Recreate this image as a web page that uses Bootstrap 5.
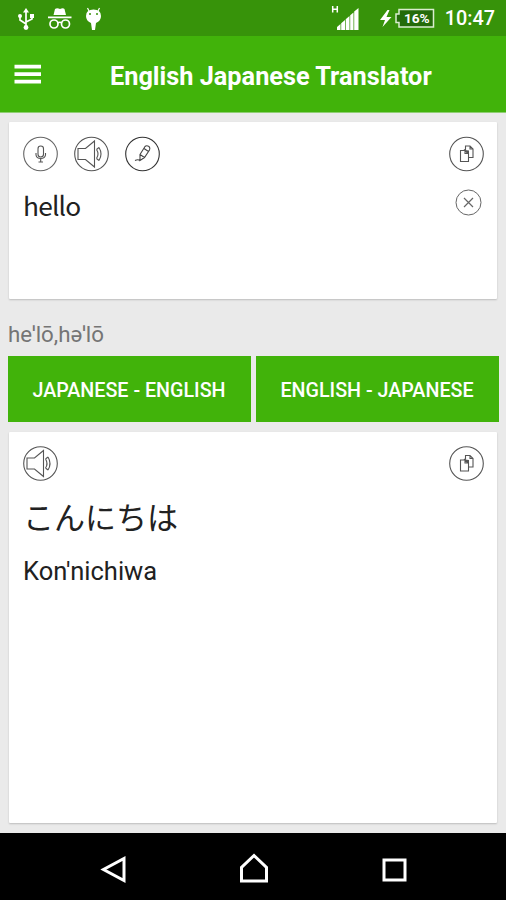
<!DOCTYPE html>
<html lang="en">
<head>
<meta charset="utf-8">
<meta name="viewport" content="width=device-width, initial-scale=1">
<title>English Japanese Translator</title>
<link href="https://cdn.jsdelivr.net/npm/bootstrap@5.3.0/dist/css/bootstrap.min.css" rel="stylesheet">
<style>
body{font-family:Roboto,"Noto Sans","Noto Sans CJK JP",sans-serif;background:#eaeaea;color:#212121;height:900px;overflow:hidden}
svg{display:block;flex:none}
.status-bar{height:36px;background:#37930a;padding:0 11px 0 17px}
.clock{font-size:19.8px;font-weight:500;line-height:36px;margin:2px 0 0 9px}
.app-bar{height:77px;background:#41b30a;padding:0 14px;border-bottom:1px solid #8fce72}
.app-title{font-size:25.3px;font-weight:700;line-height:30px;margin:5px 0 0 69px;white-space:nowrap}
.screen-body{padding:9px 9px 10px}
.panel{border-radius:1px;box-shadow:0 1px 2px #0003;padding:14px 12px 0 14px}
.source-panel{height:177px}
.result-panel{height:391px;margin-top:10px}
.tools{gap:15px}
.icon-btn{background:none;border:0;padding:0}
.source-text{font-family:"Noto Sans CJK JP",sans-serif;font-size:26.3px;letter-spacing:-.8px;line-height:34px}
.clear-btn{margin:-6px 3px 0 0}
.phonetic{font-size:22.3px;line-height:30px;color:#757575;margin:20px 0 7px -1px}
.lang-row{gap:5px;margin:0 -2px 0 -1px}
.lang-btn{height:66px;border-radius:0;background:#41b30a;color:#fff;font-size:19.7px;font-weight:500;padding:4px 1px 0 0}
.lang-btn:hover{background:#399f09;color:#fff}
.kana{font-family:"Noto Sans CJK JP",sans-serif;font-size:31px;line-height:40px;margin-top:14px}
.romaji{font-size:25.5px;line-height:32px;margin-top:19px}
.system-nav{height:67px}
</style>
</head>
<body class="d-flex flex-column">
<svg width="0" height="0" class="position-absolute" aria-hidden="true">
  <defs>
    <g id="speaker" fill="none" stroke="#555" stroke-width="1.100">
      <circle cx="17.500" cy="17.500" r="16.800"/>
      <path d="M4 12H11.500L20.500 4.500V30.500L11.500 23H4ZM22.500 13Q25.500 17.500 22.500 22M25 11Q29 17.500 25 24M22.500 13L25 11M22.500 22L25 24"/>
    </g>
    <g id="copy" fill="none" stroke="#555" stroke-width="1.100">
      <circle cx="17.500" cy="17.500" r="16.800"/>
      <path d="M11.500 14H16L19.500 17V25H11.500ZM16 14V17H19.500M16.500 13.500V9.500H21L24 12.500V21H20M21 9.500V12.500H24M15 13L19 17"/>
      <path d="M15.500 13.500L20 14V18Z" fill="#555" stroke="none"/>
    </g>
  </defs>
</svg>

<header>
  <div class="status-bar d-flex align-items-center text-white">
    <svg width="90" height="26" viewBox="17 5 90 26" fill="none" stroke="#fff" stroke-width="1.700">
      <path d="M26 12V28M20 17V20L26 24M32 17V19L26 22"/>
      <path d="M26 8L29 12.500H23Z" fill="#fff" stroke="none"/>
      <circle cx="26" cy="27.500" r="2.400" fill="#fff" stroke="none"/>
      <circle cx="20" cy="16" r="2" fill="#fff" stroke="none"/>
      <path d="M30 14H34V18H30Z" fill="#fff" stroke="none"/>
      <path d="M53.500 15L55 9Q57 7.500 60 9Q63 7.500 64.500 9L66 15ZM48 16.500H71.500V18.300H48Z" fill="#fff" stroke="none"/>
      <circle cx="54" cy="24" r="4"/><circle cx="65.500" cy="24" r="4"/><path d="M57.500 23Q60 21.500 62 23"/>
      <path d="M86 16Q86 9.500 93.500 9.500T101 16Q101 21 96 23L95 30H92L91 23Q86 21 86 16Z" fill="#fff" stroke="none"/>
      <path d="M89 11L87.500 8M98 11L99.500 8" stroke-width="1.200"/>
      <path d="M89 14h2M96 14h2" stroke="#37930a"/>
    </svg>
    <svg class="ms-auto" width="106" height="28" viewBox="330 4 106 28">
      <g fill="#fff"><path d="M337 30V27L340.500 24V30ZM341.200 30V23.200L345 20V30ZM345.700 30V19.200L349.500 16V30ZM350.200 30V15.200L353.500 12.500V30ZM354.200 30V11.600L358.500 8V30Z"/>
      <path d="M387.500 10L380 20H385L382.500 27L391.500 17H386.500L389.500 10Z"/></g>
      <path d="M332.700 6V12.500M337.300 6V12.500M332.700 9.200H337.300" stroke="#fff" stroke-width="1.500"/>
      <path d="M399 9.500H433.500V27H399V22.500H396V14H399Z" fill="#246b0a" stroke="#d9edcf" stroke-width="1.500"/>
      <text x="416.800" y="23.300" text-anchor="middle" fill="#fff" font-size="13.700" font-weight="700">16%</text>
    </svg>
    <span class="clock">10:47</span>
  </div>
  <nav class="app-bar d-flex align-items-center text-white">
    <button class="icon-btn" aria-label="Menu"><svg width="27" height="20" viewBox="0 0 27 20" fill="#fff"><path d="M.500 .700H27V4.400H.500ZM.500 8.200H27V11.900H.500ZM.500 15.700H27V19.400H.500Z"/></svg></button>
    <h1 class="app-title">English Japanese Translator</h1>
  </nav>
</header>

<main class="screen-body flex-grow-1">
  <section class="panel source-panel bg-white">
    <div class="tools d-flex">
      <button class="icon-btn" aria-label="Speak"><svg width="36" height="36" viewBox="0 -.5 36 36" fill="none" stroke="#555" stroke-width="1.100"><circle cx="17.500" cy="17.500" r="16.800" stroke="#666"/><rect x="15" y="9.500" width="5.500" height="11" rx="2.700"/><path d="M13 16.500V18.500Q13.500 22 17.700 22T22.500 18.500V16.500M17.700 22V25.500M15.500 25.500H20"/></svg></button>
      <button class="icon-btn" aria-label="Listen"><svg width="36" height="36" viewBox="0 -.5 36 36"><use href="#speaker"/></svg></button>
      <button class="icon-btn" aria-label="Handwriting"><svg width="36" height="36" viewBox="0 -.5 36 36" fill="none" stroke="#444" stroke-width="1.100"><circle cx="17.500" cy="17.500" r="16.800" stroke="#333"/><path d="M15 18L20 10Q21.500 8.500 24 10Q25.500 11.500 24.500 13.500L19.500 21L15 24ZM19 12L23.500 15M15 18L19.500 21M10 24Q13 22.500 15 24"/></svg></button>
      <button class="icon-btn ms-auto" aria-label="Copy"><svg width="36" height="36" viewBox="0 -.5 36 36"><use href="#copy"/></svg></button>
    </div>
    <div class="d-flex justify-content-between align-items-center mt-3">
      <div class="source-text">hello</div>
      <button class="icon-btn clear-btn" aria-label="Clear"><svg width="27" height="27" viewBox="0 0 27 27" fill="none" stroke="#666"><circle cx="13.500" cy="13.500" r="12.500"/><path d="M9 9L18 18M18 9L9 18" stroke-width="1.200"/></svg></button>
    </div>
  </section>

  <p class="phonetic">heˈlō,həˈlō</p>
  <div class="lang-row d-flex">
    <button class="btn lang-btn w-50">JAPANESE - ENGLISH</button>
    <button class="btn lang-btn w-50">ENGLISH - JAPANESE</button>
  </div>

  <section class="panel result-panel bg-white">
    <div class="tools d-flex justify-content-between">
      <button class="icon-btn" aria-label="Listen"><svg width="36" height="36" viewBox="0 0 36 36"><use href="#speaker"/></svg></button>
      <button class="icon-btn" aria-label="Copy"><svg width="36" height="36" viewBox="0 0 36 36"><use href="#copy"/></svg></button>
    </div>
    <div class="kana" lang="ja">こんにちは</div>
    <div class="romaji">Kon'nichiwa</div>
  </section>
</main>

<footer class="system-nav bg-black">
  <svg width="506" height="67" viewBox="0 833 506 67" fill="none" stroke="#fff" stroke-width="3">
    <path d="M124 858.500V880.500L103.500 869.500Z"/>
    <path d="M241.500 881V867.500L254 855.500L266.500 867.500V881Z"/>
    <path d="M384 860H405V880H384Z"/>
  </svg>
</footer>
<script src="https://cdn.jsdelivr.net/npm/bootstrap@5.3.0/dist/js/bootstrap.bundle.min.js"></script>
</body>
</html>
